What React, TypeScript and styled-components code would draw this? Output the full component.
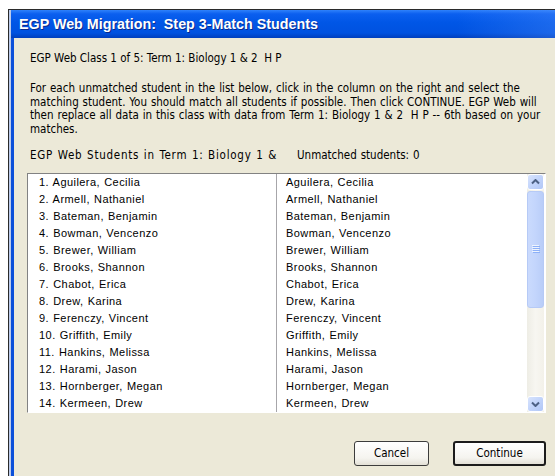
import React from "react";
import styled, { createGlobalStyle } from "styled-components";

const GlobalStyle = createGlobalStyle`
  html, body {
    margin: 0;
    padding: 0;
    background: #ffffff;
    overflow: hidden;
  }
  * {
    box-sizing: border-box;
  }
`;

const Window = styled.div`
  margin: 9px 0 0 8px;
  width: 560px;
  height: 470px;
  border-left: 1px solid #2b2b2b;
  border-top: 1px solid #2b2b2b;
  padding-left: 2px;
  background: #bccbea;
  display: flex;
  flex-direction: column;
`;

const TitleBar = styled.div`
  height: 28px;
  flex-shrink: 0;
  display: flex;
  align-items: center;
  padding-left: 8px;
  background: linear-gradient(
      90deg,
      rgba(255, 255, 255, 0) 80%,
      rgba(90, 150, 255, 0.35) 100%
    ),
    linear-gradient(
      180deg,
      #2f82fb 0%,
      #0b5fef 14%,
      #0056e6 45%,
      #0052e0 82%,
      #003fbd 100%
    );
`;

const Title = styled.span`
  font-family: "Liberation Sans", Arial, sans-serif;
  font-weight: bold;
  font-size: 14.3px;
  color: #ffffff;
  text-shadow: 1px 1px 0 #0b2a8a;
  white-space: pre;
`;

const Body = styled.div`
  flex: 1;
  border-left: 3px solid #0b50da;
  background: #ece9d8;
  padding: 13px 0 0 13px;
  display: flex;
  flex-direction: column;
  font-family: "DejaVu Sans Condensed", "Liberation Sans", sans-serif;
  font-size: 11.5px;
  word-spacing: 0.6px;
  color: #000000;
`;

const Line = styled.div`
  padding-left: 3px;
  line-height: 14px;
  white-space: pre;
  word-spacing: 0;
`;

const Paragraph = styled.p`
  margin: 17px 0 0;
  padding-left: 3px;
  width: 518px;
  line-height: 13.7px;
`;

const LabelRow = styled.div`
  margin-top: 11px;
  padding-left: 3px;
  display: flex;
  line-height: 14px;
  white-space: pre;
`;

// the class name is longer than the label slot, so it gets cut off
const ClippedLabel = styled.span`
  width: 247px;
  overflow: hidden;
  letter-spacing: 0.75px;
`;

const Counter = styled.span`
  margin-left: 20px;
`;

const ListBox = styled.div`
  margin-top: 11px;
  width: 519px;
  display: flex;
  border: 1px solid;
  border-color: #828282 #ffffff #ffffff #828282;
  background: #ffffff;
  font-family: "Liberation Sans", Arial, sans-serif;
  font-size: 11px;
  letter-spacing: 0.45px;
`;

const Column = styled.div<{ $divided?: boolean; $indent: number }>`
  width: ${(p) => (p.$divided ? "249px" : "auto")};
  flex: ${(p) => (p.$divided ? "none" : "1")};
  border-right: ${(p) => (p.$divided ? "1px solid #a7a6aa" : "none")};
  padding-left: ${(p) => p.$indent}px;
`;

const Row = styled.div`
  height: 17px;
  line-height: 17px;
  white-space: nowrap;
`;

const ScrollBar = styled.div`
  width: 17px;
  margin-right: 1px;
  display: flex;
  flex-direction: column;
  background: linear-gradient(90deg, #eeede5 0%, #f7f6f1 50%, #f3f1e9 100%);
`;

const ArrowButton = styled.div`
  height: 16px;
  flex-shrink: 0;
  display: flex;
  align-items: center;
  justify-content: center;
  border: 1px solid #ffffff;
  border-radius: 3px;
  background: linear-gradient(135deg, #d8e4fd 0%, #c2d4fb 50%, #b1c7f6 100%);
`;

const Thumb = styled.div`
  margin-top: 1px;
  height: 117px;
  border: 1px solid #b6caf6;
  border-radius: 3px;
  background: linear-gradient(90deg, #cadafd 0%, #c3d5fc 50%, #b9cdf8 100%);
  display: flex;
  align-items: center;
  justify-content: center;
`;

const Track = styled.div`
  flex: 1;
`;

const ButtonRow = styled.div`
  width: 519px;
  margin-top: 28px;
  display: flex;
  justify-content: flex-end;
  gap: 24px;
`;

const Button = styled.button<{ $primary?: boolean; $width: number }>`
  width: ${(p) => p.$width}px;
  height: 25px;
  padding: 0;
  border-radius: 3px;
  border: ${(p) => (p.$primary ? "2px solid #1c1c1c" : "1px solid #3c3c3c")};
  background: linear-gradient(180deg, #ffffff 0%, #f5f4ef 70%, #e3e0d6 100%);
  font-family: "DejaVu Sans Condensed", "Liberation Sans", sans-serif;
  font-size: 11.5px;
  color: #000000;
`;

const students = [
  "Aguilera, Cecilia",
  "Armell, Nathaniel",
  "Bateman, Benjamin",
  "Bowman, Vencenzo",
  "Brewer, William",
  "Brooks, Shannon",
  "Chabot, Erica",
  "Drew, Karina",
  "Ferenczy, Vincent",
  "Griffith, Emily",
  "Hankins, Melissa",
  "Harami, Jason",
  "Hornberger, Megan",
  "Kermeen, Drew",
];

const Chevron: React.FC<{ down?: boolean }> = ({ down }) => (
  <svg width="9" height="6" viewBox="0 0 9 6">
    <path
      d={down ? "M1 1.5 L4.5 5 L8 1.5" : "M1 4.5 L4.5 1 L8 4.5"}
      fill="none"
      stroke="#4d6185"
      strokeWidth="2"
    />
  </svg>
);

const Grip: React.FC = () => (
  <svg width="8" height="8" viewBox="0 0 8 8">
    {[0, 2, 4, 6].map((y) => (
      <g key={y}>
        <rect x="0" y={y} width="7" height="1" fill="#eef4fe" />
        <rect x="1" y={y + 1} width="7" height="1" fill="#8cb0f8" />
      </g>
    ))}
  </svg>
);

export default function App() {
  return (
    <>
      <GlobalStyle />
      <Window>
        <TitleBar>
          <Title>EGP Web Migration:  Step 3-Match Students</Title>
        </TitleBar>
        <Body>
          <Line>EGP Web Class 1 of 5: Term 1: Biology 1 &amp; 2  H P</Line>
          <Paragraph>
            For each unmatched student in the list below, click in the column
            on the right and select the matching student. You should match all
            students if possible. Then click CONTINUE. EGP Web will then
            replace all data in this class with data from Term 1: Biology 1
            &amp; 2&nbsp; H P -- 6th based on your matches.
          </Paragraph>
          <LabelRow>
            <ClippedLabel>
              EGP Web Students in Term 1: Biology 1 &amp; 2  H P -- 6th
            </ClippedLabel>
            <Counter>Unmatched students: 0</Counter>
          </LabelRow>
          <ListBox>
            <Column $divided $indent={11}>
              {students.map((name, i) => (
                <Row key={name}>
                  {i + 1}. {name}
                </Row>
              ))}
            </Column>
            <Column $indent={9}>
              {students.map((name) => (
                <Row key={name}>{name}</Row>
              ))}
            </Column>
            <ScrollBar>
              <ArrowButton>
                <Chevron />
              </ArrowButton>
              <Thumb>
                <Grip />
              </Thumb>
              <Track />
              <ArrowButton>
                <Chevron down />
              </ArrowButton>
            </ScrollBar>
          </ListBox>
          <ButtonRow>
            <Button $width={75}>Cancel</Button>
            <Button $primary $width={93}>
              Continue
            </Button>
          </ButtonRow>
        </Body>
      </Window>
    </>
  );
}
